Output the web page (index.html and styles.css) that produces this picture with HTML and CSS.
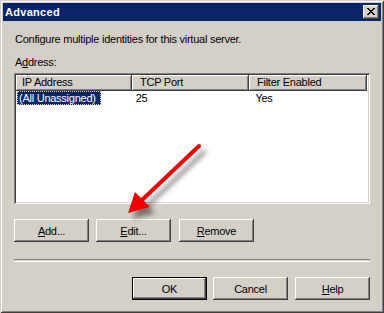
FILE: index.html
```html
<!DOCTYPE html>
<html lang="en">
<head>
  <meta charset="UTF-8">
  <title>Advanced</title>
  <link rel="stylesheet" href="styles.css">
</head>
<body>

  <div class="window">
    <div class="titlebar">
      <span class="title">Advanced</span>
      <div class="close">
        <svg width="8" height="7" viewBox="0 0 8 7" shape-rendering="crispEdges">
          <path d="M0 0h2v1h-2z M6 0h2v1h-2z M1 1h2v1h-2z M5 1h2v1h-2z M2 2h4v1h-4z M3 3h2v1h-2z M2 4h4v1h-4z M1 5h2v1h-2z M5 5h2v1h-2z M0 6h2v1h-2z M6 6h2v1h-2z" fill="#000"/>
        </svg>
      </div>
    </div>

    <div class="content">
      <p class="intro">Configure multiple identities for this virtual server.</p>
      <p class="label">A<u>d</u>dress:</p>

      <div class="listview">
        <div class="lv-header">
          <div class="col col-ip">IP Address</div>
          <div class="col col-port">TCP Port</div>
          <div class="col col-filter">Filter Enabled</div>
        </div>
        <div class="lv-row">
          <div class="cell col-ip"><span class="selected">(All Unassigned)</span></div>
          <div class="cell col-port">25</div>
          <div class="cell col-filter">Yes</div>
        </div>
      </div>

      <div class="btn-row">
        <div class="btn"><u>A</u>dd...</div>
        <div class="btn"><u>E</u>dit...</div>
        <div class="btn btn-remove"><u>R</u>emove</div>
      </div>

      <div class="separator"></div>

      <div class="footer">
        <div class="btn btn-default">OK</div>
        <div class="btn">Cancel</div>
        <div class="btn btn-help"><u>H</u>elp</div>
      </div>
    </div>

    <svg class="arrow" width="384" height="313" viewBox="0 0 384 313">
      <defs>
        <filter id="shadow" x="-20%" y="-20%" width="150%" height="150%">
          <feDropShadow dx="5" dy="6" stdDeviation="2.5" flood-color="#000" flood-opacity="0.45"/>
        </filter>
      </defs>
      <g filter="url(#shadow)">
        <line x1="199" y1="146" x2="142" y2="200" stroke="#f00000" stroke-width="4" stroke-linecap="round"/>
        <polygon points="128,213 135,192 150,207" fill="#f00000"/>
      </g>
    </svg>
  </div>

</body>
</html>
```

FILE: styles.css
```css
body {
  margin: 0;
  font-family: "Liberation Sans", Arial, sans-serif;
  font-size: 11px;
  letter-spacing: -0.25px;
  color: #000;
}

.window {
  position: relative;
  width: 384px;
  height: 313px;
  box-sizing: border-box;
  padding: 3px;
  background-color: #d4d0c8;
  box-shadow: inset 1px 1px #d4d0c8, inset -1px -1px #404040, inset 2px 2px #fff, inset -2px -2px #808080;
  display: flex;
  flex-direction: column;
}

.titlebar {
  height: 18px;
  background-color: #0a246a;
  display: flex;
  align-items: center;
  justify-content: space-between;
  padding: 0 2px;
}

.title {
  color: #fff;
  font-weight: bold;
  font-size: 11px;
  letter-spacing: 0.3px;
}

.close {
  width: 16px;
  height: 14px;
  box-sizing: border-box;
  background-color: #d4d0c8;
  box-shadow: inset -1px -1px #404040, inset 1px 1px #fff, inset -2px -2px #808080;
  display: flex;
  align-items: center;
  justify-content: center;
  padding-bottom: 1px;
}

.content {
  flex: 1;
  padding: 12px 11px 0;
  display: flex;
  flex-direction: column;
}

.intro, .label {
  margin: 0;
  line-height: 13px;
  padding-left: 1px;
}

.label {
  margin-top: 10px;
}

.listview {
  margin-top: 4px;
  height: 131px;
  box-sizing: border-box;
  padding: 2px;
  background-color: #fff;
  box-shadow: inset 1px 1px #808080, inset -1px -1px #fff, inset 2px 2px #404040, inset -2px -2px #d4d0c8;
}

.lv-header, .lv-row {
  display: flex;
}

.col {
  height: 16px;
  line-height: 15px;
  box-sizing: border-box;
  background-color: #d4d0c8;
  box-shadow: inset -1px -1px #404040, inset 1px 1px #fff, inset -2px -2px #808080;
}

.col-ip {
  width: 116px;
  padding-left: 6px;
}

.col-port {
  width: 117px;
  padding-left: 8px;
}

.col-filter {
  width: 118px;
  padding-left: 8px;
}

.lv-row {
  height: 14px;
  line-height: 14px;
}

.cell.col-ip {
  padding-left: 1px;
}

.selected {
  display: inline-block;
  height: 14px;
  line-height: 12px;
  box-sizing: border-box;
  padding: 0 4px 0 1px;
  background-color: #0a246a;
  color: #fff;
  border: 1px dotted #e8d890;
}

.btn-row {
  margin-top: 15px;
  display: flex;
  gap: 7px;
}

.btn {
  width: 75px;
  height: 23px;
  box-sizing: border-box;
  background-color: #d4d0c8;
  box-shadow: inset -1px -1px #404040, inset 1px 1px #fff, inset -2px -2px #808080, inset 2px 2px #d4d0c8;
  display: flex;
  align-items: center;
  justify-content: center;
}

.btn-remove {
  margin-left: 1px;
}

.btn-default {
  border: 1px solid #000;
}

.btn-help {
  margin-left: 1px;
}

.separator {
  margin-top: 17px;
  height: 1px;
  border-top: 1px solid #808080;
  border-bottom: 1px solid #fff;
}

.footer {
  margin-top: 15px;
  display: flex;
  justify-content: flex-end;
  gap: 6px;
}

.arrow {
  position: absolute;
  top: 0;
  left: 0;
  pointer-events: none;
}
```
